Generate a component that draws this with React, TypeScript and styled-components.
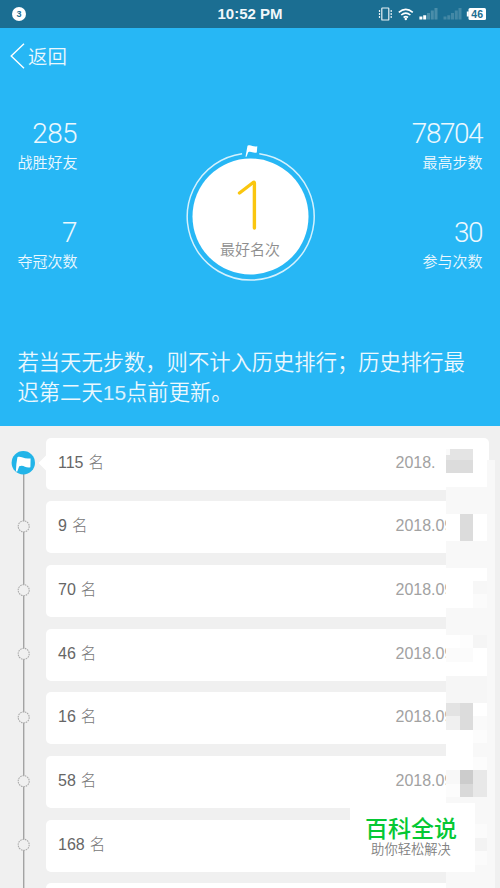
import React from "react";
import styled, { createGlobalStyle } from "styled-components";

const Global = createGlobalStyle`
  * { box-sizing: border-box; }
  html, body { margin: 0; padding: 0; }
  body {
    background: #f0f0f0;
    font-family: "Liberation Sans", "Noto Sans CJK SC", sans-serif;
    overflow: hidden;
  }
`;

const Screen = styled.div`
  position: relative;
  width: 500px;
  height: 888px;
  overflow: hidden;
  background: #f0f0f0;
`;

const StatusBar = styled.header`
  display: grid;
  grid-template-columns: 1fr auto 1fr;
  align-items: center;
  height: 28px;
  padding: 0 13px 0 12px;
  background: #1b6e92;
  color: #fff;
`;

const Notice = styled.span`
  width: 14px;
  height: 14px;
  border-radius: 50%;
  background: #fff;
  color: #1b6e92;
  font-size: 9px;
  font-weight: 700;
  line-height: 14px;
  text-align: center;
`;

const Clock = styled.span`
  font-size: 15px;
  font-weight: 700;
  line-height: 20px;
  color: #f1f7fa;
  padding-left: 1px;
`;

const StatusIcons = styled.div`
  display: flex;
  justify-content: flex-end;
`;

const Hero = styled.section`
  height: 398px;
  background: #27b7f5;
  color: #ecf8fe;
`;

const Back = styled.div`
  display: flex;
  align-items: center;
  height: 56px;
  padding-left: 10px;
  gap: 3px;
  font: 350 19.4px/30px "Noto Sans CJK SC", sans-serif;
`;

const Stats = styled.div`
  display: grid;
  grid-template-columns: 60px 1fr 71px;
  height: 236px;
  padding: 0 17px 0 18px;
`;

const StatColumn = styled.div`
  display: flex;
  flex-direction: column;
  align-items: flex-end;
  gap: 40px;
  padding-top: 35px;
`;

const Stat = styled.div`
  height: 59px;
  text-align: right;
  white-space: nowrap;
`;

const StatValue = styled.div<{ $tracking?: number }>`
  font: 300 28px/30px Roboto, sans-serif;
  letter-spacing: ${({ $tracking = -0.6 }) => $tracking}px;
  margin-right: 1px;
`;

const StatLabel = styled.div`
  font: 350 15px/25px "Noto Sans CJK SC", sans-serif;
  margin-right: 0.5px;
`;

const Medal = styled.div`
  display: flex;
  justify-content: center;
  padding-top: 60px;
`;

const MedalFace = styled.div`
  display: grid;
  flex: none;
  margin-left: 12px;
  width: 130px;
  height: 140px;
  > * { grid-area: 1 / 1; }
`;

const MedalLabel = styled.span`
  align-self: end;
  justify-self: center;
  margin-bottom: 23.5px;
  padding-right: 2px;
  font: 350 15px/24px "Noto Sans CJK SC", sans-serif;
  color: #8e8e8e;
`;

const Description = styled.p`
  margin: 0;
  padding: 26px 16px 0 17.5px;
  font: 350 21.3px/30px "Noto Sans CJK SC", sans-serif;
`;

const Numeral = styled.span`
  font: 400 21px/20px "Liberation Sans", sans-serif;
  opacity: 0.9;
`;

const History = styled.main`
  display: grid;
  grid-template-columns: 46px 443px;
  height: 462px;
  overflow: hidden;
`;

const Cards = styled.div`
  display: flex;
  flex-direction: column;
  gap: 11.7px;
  padding-top: 11.5px;
`;

const Card = styled.div`
  display: flex;
  flex: none;
  align-items: center;
  justify-content: space-between;
  height: 52px;
  padding: 0 43px 2px 12px;
  border-radius: 5px;
  background: #fff;
`;

const Rank = styled.div`
  display: flex;
  align-items: center;
  gap: 5px;
  font: 400 16px/24px "Liberation Sans", sans-serif;
  color: #666;
`;

const RankUnit = styled.span`
  padding-bottom: 4px;
  font: 300 15.5px/20px "Noto Sans CJK SC", sans-serif;
  color: #777;
`;

const DateText = styled.div`
  width: 50.5px;
  white-space: nowrap;
  font: 400 16px/24px "Liberation Sans", sans-serif;
  color: #a2a2a2;
`;

const Overlay = styled.svg`
  position: absolute;
  left: 446px;
  top: 440px;
`;

const Watermark = styled.aside`
  position: absolute;
  left: 350px;
  top: 803px;
  width: 125px;
  height: 69px;
  padding: 7px 0 0;
  background: #fff;
  text-align: center;
`;

const Brand = styled.div`
  height: 30px;
  font: 500 23px/34px "Noto Sans CJK SC", sans-serif;
  color: #05c834;
  padding-right: 3px;
`;

const Slogan = styled.div`
  height: 20px;
  margin-top: -1px;
  font: 350 13.3px/20px "Noto Sans CJK SC", sans-serif;
  color: #808080;
  padding-right: 3px;
`;

const ranks = [115, 9, 70, 46, 16, 58, 168];

/* x, y, width, height, fill — in page coordinates */
const blocks: [number, number, number, number, string][] = [
  [446.3, 449, 26.7, 10.5, "#e4e4e4"],
  [446.3, 449, 4, 6, "#fafafa"],
  [446.3, 459.5, 26.7, 13.2, "#dcdcdc"],
  [486.6, 460, 8.4, 428, "#f8f8f8"],
  [446.3, 486.5, 40.3, 27, "#f8f8f8"],
  [459.5, 513.5, 13.3, 27, "#dcdcdc"],
  [446.3, 540.6, 40.3, 27, "#f8f8f8"],
  [473, 581, 13.6, 13.4, "#f7f7f7"],
  [473, 594.4, 13.6, 14, "#fbfbfb"],
  [446.3, 608.3, 40.3, 27, "#f8f8f8"],
  [473, 635, 13.6, 13.4, "#f5f5f5"],
  [459.5, 635, 13.5, 13.4, "#fdfdfd"],
  [446.3, 648.4, 26.7, 13.4, "#fbfbfb"],
  [446.3, 676, 40.3, 27, "#f6f6f6"],
  [446.3, 703, 13.2, 13.3, "#e3e3e3"],
  [459.5, 703, 13.5, 26.7, "#dcdcdc"],
  [446.3, 716.3, 13.2, 13.4, "#f0f0f0"],
  [473, 716.3, 13.6, 13.4, "#fafafa"],
  [473, 729.7, 13.6, 13.6, "#fcfcfc"],
  [473, 743.3, 13.6, 13.4, "#f8f8f8"],
  [473, 756.7, 13.6, 13.5, "#fcfcfc"],
  [446.3, 770, 13.4, 14, "#f8f8f8"],
  [459.7, 770, 13.3, 13.7, "#cccccc"],
  [473, 770, 13.6, 27.3, "#e8e8e8"],
  [446.3, 783.7, 13.4, 13.6, "#fcfcfc"],
  [459.7, 783.7, 13.3, 13.6, "#d9d9d9"],
  [446.3, 797.3, 40.3, 27, "#f8f8f8"],
  [473, 824.3, 13.6, 14, "#fbfbfb"],
  [473, 838.3, 13.6, 13, "#f3f3f3"],
  [473, 851.3, 13.6, 13.7, "#fbfbfb"],
  [446.3, 865, 40.3, 23, "#f8f8f8"],
];

const Timeline = () => (
  <svg width="46" height="462" viewBox="0 426 46 462" fill="none">
    <path d="M23.7 463V888" stroke="#a3a3a3" strokeWidth="1.4" />
    <circle cx="23.3" cy="462.7" r="11.7" fill="#22b4e8" />
    <path d="M17.400 457.200c3.600-1.400 5.600 2.200 13.200 1.200l-.2 8.800c-5 1.200-6.600-3-11.200-1l-1.900 5.200h-1.400q.2-7.800 1.500-14.200z" fill="#fff" />
    {[526.4, 590.2, 653.8, 717.4, 781.2, 844.8].map((y) => (
      <circle key={y} cx="23.7" cy={y} r="5.5" fill="#f0f0f0" stroke="#aaa" strokeWidth="1.1" strokeDasharray="1.6 .8" />
    ))}
    <path d="M46 455.500v15L38.500 463z" fill="#fff" />
  </svg>
);

export default function App() {
  return (
    <>
      <Global />
      <Screen>
        <StatusBar>
          <Notice>3</Notice>
          <Clock>10:52 PM</Clock>
          <StatusIcons>
            <svg width="109" height="20" viewBox="378 4 109 20" fill="none">
              <g stroke="#e6f0f4" strokeWidth="1.2">
                <rect x="381.8" y="8" width="7" height="12" rx=".6" />
                <path d="M379.5 10v8M391.2 10v8" strokeDasharray="2 1" />
              </g>
              <g stroke="#fff" strokeWidth="1.6">
                <path d="M398.8 12.4q7-6 14 0M401.2 15q4.600-3.800 9.200 0M403.600 17.500q2.200-1.700 4.400 0" />
              </g>
              <circle cx="405.8" cy="19" r="1.2" fill="#fff" />
              <path d="M419.400 16.600h3V19.500h-3zM423.200 15.200h3V19.500h-3z" fill="#fff" />
              <path d="M427 13h3v6.500h-3zM430.800 10.500h3v9h-3zM434.500 8h3v11.500h-3z" fill="#4a8da9" />
              <path d="M443.500 16.600h3V19.500h-3zM447.300 15.200h3V19.500h-3zM451 13h3v6.500h-3zM454.800 10.500h3v9h-3zM458.500 8h3v11.500h-3z" fill="#4388a5" />
              <rect x="468.500" y="8" width="17.500" height="12" rx="1.500" fill="#fff" />
              <rect x="466.800" y="11.500" width="2" height="5" fill="#fff" />
              <text x="477.200" y="17.700" textAnchor="middle" fontFamily="Liberation Sans, sans-serif" fontWeight="700" fontSize="10.500" fill="#1b6e92">46</text>
            </svg>
          </StatusIcons>
        </StatusBar>

        <Hero>
          <Back>
            <svg width="15" height="26" viewBox="0 0 15 26" fill="none" stroke="#fff" strokeWidth="1.4">
              <path d="M14 .8L1.200 13 14 25.200" />
            </svg>
            返回
          </Back>
          <Stats>
            <StatColumn>
              <Stat>
                <StatValue>285</StatValue>
                <StatLabel>战胜好友</StatLabel>
              </Stat>
              <Stat>
                <StatValue>7</StatValue>
                <StatLabel>夺冠次数</StatLabel>
              </Stat>
            </StatColumn>
            <Medal>
              <MedalFace>
                <svg width="130" height="140" viewBox="185.500 144 130 140" fill="none">
                  <path d="M258.800 153.700a63.500 63.500 0 1 1-17.200 0" stroke="#d5f1fd" strokeWidth="1.500" />
                  <circle cx="250" cy="216.500" r="58" fill="#fff" />
                  <path d="M247 145.800c3.500-1.800 5.500 1.700 9.800.5l-.5 6.200c-4 1-5.500-1.600-8.600-.3l-1.700 4.500h-1z" fill="#fff" />
                  <path d="M239 193l13.700-10.500q1.200-.7 1.200.7V228" stroke="#fac60f" strokeWidth="3.400" strokeLinecap="round" strokeLinejoin="round" />
                </svg>
                <MedalLabel>最好名次</MedalLabel>
              </MedalFace>
            </Medal>
            <StatColumn>
              <Stat>
                <StatValue $tracking={-1.5}>78704</StatValue>
                <StatLabel>最高步数</StatLabel>
              </Stat>
              <Stat>
                <StatValue $tracking={-1.5}>30</StatValue>
                <StatLabel>参与次数</StatLabel>
              </Stat>
            </StatColumn>
          </Stats>
          <Description>
            若当天无步数，则不计入历史排行；历史排行最迟第二天<Numeral>15</Numeral>点前更新。
          </Description>
        </Hero>

        <History>
          <Timeline />
          <Cards>
            {ranks.map((rank, i) => (
              <Card key={rank}>
                <Rank>
                  {rank}
                  <RankUnit>名</RankUnit>
                </Rank>
                {i < 6 && <DateText>{i === 0 ? "2018." : "2018.09"}</DateText>}
              </Card>
            ))}
            <Card />
          </Cards>
        </History>

        <Overlay width="54" height="448" viewBox="446 440 54 448" shapeRendering="crispEdges">
          <rect x="446.300" y="455" width="40.300" height="433" fill="#fff" />
          {blocks.map(([x, y, w, h, fill]) => (
            <rect key={`${x}-${y}-${fill}`} x={x} y={y} width={w} height={h} fill={fill} />
          ))}
        </Overlay>

        <Watermark>
          <Brand>百科全说</Brand>
          <Slogan>助你轻松解决</Slogan>
        </Watermark>
      </Screen>
    </>
  );
}
